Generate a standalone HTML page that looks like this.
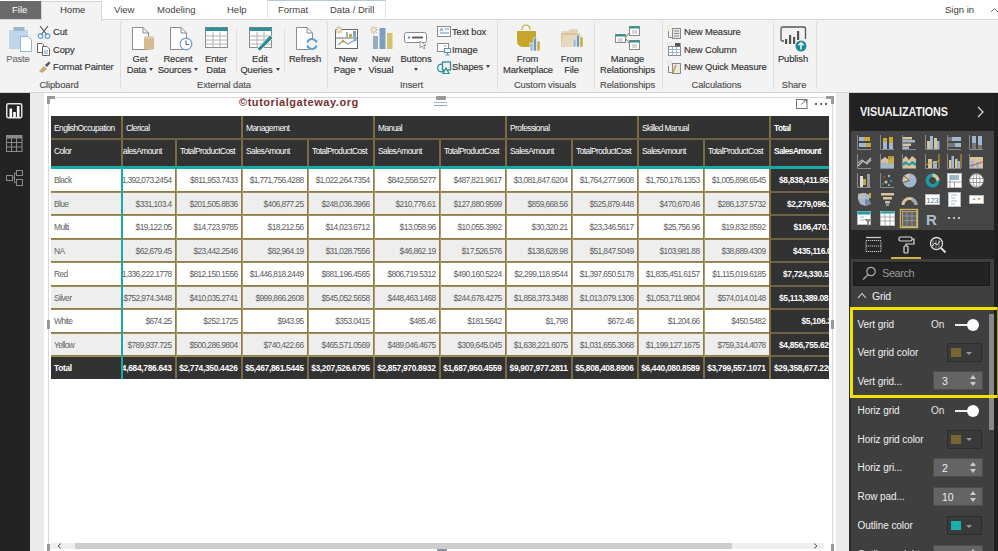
<!DOCTYPE html>
<html><head><meta charset="utf-8">
<style>
*{box-sizing:border-box;margin:0;padding:0}
html,body{width:998px;height:551px;overflow:hidden;background:#fff;font-family:"Liberation Sans",sans-serif}
.a{position:absolute}
.t{position:absolute;white-space:nowrap;line-height:1}
svg{position:absolute;overflow:visible}
.tb{font-size:9.5px;color:#444;top:5px}
.rt{font-size:9.4px;color:#333;letter-spacing:-0.1px;-webkit-text-stroke:0.15px #333}
.gl{font-size:9.4px;color:#505050;top:80px;letter-spacing:-0.1px;-webkit-text-stroke:0.15px #505050}
.sep{position:absolute;width:1px;background:#dedede;top:22px;height:67px}
.ssep{position:absolute;width:1px;background:#e0e0e0;top:28px;height:45px}
.th{font-size:8.4px;color:#fff;letter-spacing:-0.55px}
.td{font-size:8.4px;color:#5e5e5e;letter-spacing:-0.6px}
.tt{font-size:8.4px;color:#fff;font-weight:bold;letter-spacing:-0.3px}
.vt{font-size:10.5px;color:#f0f0f0;letter-spacing:-0.25px}
</style></head><body>
<div class="a" style="left:0;top:0;width:998px;height:20px;background:#fff;border-bottom:1px solid #d6d6d6"></div>
<div class="a" style="left:0;top:1px;width:41px;height:18px;background:#6b6969"></div>
<div class="t" style="left:12px;top:5px;font-size:9.5px;color:#fff">File</div>
<div class="a" style="left:41px;top:1px;width:61px;height:20px;background:#f3f3f3;border:1px solid #d6d6d6;border-bottom:none;z-index:2"></div>
<div class="t tb" style="left:60px;color:#333;z-index:3">Home</div>
<div class="t tb" style="left:114px">View</div>
<div class="t tb" style="left:157px">Modeling</div>
<div class="t tb" style="left:227px">Help</div>
<div class="a" style="left:267px;top:0;width:119px;height:20px;border-left:1px solid #e1e6ec;border-right:1px solid #e1e6ec;border-top:1px solid #b4c8dc"></div>
<div class="t tb" style="left:278px">Format</div>
<div class="t tb" style="left:330px">Data / Drill</div>
<div class="t tb" style="left:945px;color:#3a3a3a">Sign in</div>
<svg style="left:990px;top:7px" width="8" height="6"><path d="M1 5 L4.5 1.5 L8 5" fill="none" stroke="#777" stroke-width="1"/></svg>
<div class="a" style="left:0;top:20px;width:998px;height:73px;background:#f3f3f3;border-bottom:1px solid #d3d3d3"></div>
<style>
.c{position:absolute;width:120px;text-align:center;white-space:nowrap;line-height:1}
.dd{display:inline-block;width:0;height:0;border-left:2.5px solid transparent;border-right:2.5px solid transparent;border-top:3px solid #444;vertical-align:middle;margin-left:3px;position:relative;top:-1px}
</style>
<!-- separators -->
<div class="sep" style="left:120px"></div>
<div class="ssep" style="left:236px"></div>
<div class="ssep" style="left:284px"></div>
<div class="sep" style="left:327px"></div>
<div class="sep" style="left:497px"></div>
<div class="sep" style="left:594px"></div>
<div class="sep" style="left:662px"></div>
<div class="sep" style="left:773px"></div>
<div class="sep" style="left:816px"></div>
<!-- Clipboard -->
<svg style="left:8px;top:26px" width="24" height="26" viewBox="0 0 24 26">
<rect x="1" y="4" width="19" height="19" fill="#c0d7ea"/>
<rect x="5.5" y="1" width="11" height="4" fill="#9cb6cc"/>
<path d="M12.5 10.5 H20 L23.5 14 V25.5 H12.5 Z" fill="#fff" stroke="#8fb6d8" stroke-width="1"/>
</svg>
<div class="c rt" style="left:-42px;top:54px;color:#8a8a8a">Paste</div>
<svg style="left:37px;top:25px" width="14" height="14" viewBox="0 0 14 14">
<path d="M3 1 L10 10 M11 1 L4 10" stroke="#555" stroke-width="1.2" fill="none"/>
<circle cx="3.5" cy="11" r="2.3" fill="none" stroke="#6aa0d0" stroke-width="1.2"/>
<circle cx="10.5" cy="11" r="2.3" fill="none" stroke="#6aa0d0" stroke-width="1.2"/>
</svg>
<div class="t rt" style="left:53px;top:27px">Cut</div>
<svg style="left:37px;top:43px" width="14" height="13" viewBox="0 0 14 13">
<path d="M0.5 0.5 H5 L6.5 2 V9.5 H0.5 Z" fill="#fff" stroke="#666" stroke-width="1"/>
<path d="M5.5 3.5 H10 L12.5 6 V12.5 H5.5 Z" fill="#fff" stroke="#666" stroke-width="1"/>
<path d="M7 8 H11 M7 10 H11" stroke="#6aa0d0" stroke-width="1"/>
</svg>
<div class="t rt" style="left:53px;top:44.5px">Copy</div>
<svg style="left:38px;top:61px" width="13" height="12" viewBox="0 0 13 12">
<path d="M1 10 L6 5 L9 8 L4 12 Z" fill="#c9ab7a"/>
<path d="M7 4 L11 0.5 L12.5 2 L9 6 Z" fill="#555"/>
</svg>
<div class="t rt" style="left:53px;top:62px">Format Painter</div>
<div class="c gl" style="left:-1px">Clipboard</div>
<!-- External data -->
<svg style="left:131px;top:26px" width="25" height="25" viewBox="0 0 25 25">
<path d="M1.5 1.5 H12 L17.5 7 V23.5 H1.5 Z" fill="#fff" stroke="#8a8a8a" stroke-width="1"/>
<path d="M12 1.5 V7 H17.5" fill="none" stroke="#8a8a8a" stroke-width="1"/>
<path d="M13 11.5 Q18 9.5 23 11.5 V23 Q18 25 13 23 Z" fill="#d4bb93"/>
<ellipse cx="18" cy="11.5" rx="5" ry="1.5" fill="#e0ccaa"/>
</svg>
<div class="c rt" style="left:80px;top:54px">Get</div>
<div class="c rt" style="left:80px;top:64.5px">Data<span class="dd"></span></div>
<svg style="left:169px;top:26px" width="25" height="25" viewBox="0 0 25 25">
<path d="M1.5 1.5 H12 L17.5 7 V23.5 H1.5 Z" fill="#fff" stroke="#8a8a8a" stroke-width="1"/>
<path d="M12 1.5 V7 H17.5" fill="none" stroke="#8a8a8a" stroke-width="1"/>
<circle cx="17" cy="18" r="5.8" fill="#fff" stroke="#6a9fcf" stroke-width="1.2"/>
<path d="M17 14.5 V18.5 H20" fill="none" stroke="#555" stroke-width="1"/>
</svg>
<div class="c rt" style="left:118px;top:54px">Recent</div>
<div class="c rt" style="left:118px;top:64.5px">Sources<span class="dd"></span></div>
<svg style="left:205px;top:27px" width="24" height="22" viewBox="0 0 24 22">
<rect x="0.5" y="0.5" width="22" height="20" fill="#fff" stroke="#8a8a8a" stroke-width="1"/>
<rect x="0.5" y="0.5" width="22" height="3.5" fill="#2f8f94"/>
<path d="M0.5 9 H22.5 M0.5 13 H22.5 M0.5 17 H22.5 M8 4.5 V20.5 M15 4.5 V20.5" stroke="#b0b0b0" stroke-width="1"/>
</svg>
<div class="c rt" style="left:156px;top:54px">Enter</div>
<div class="c rt" style="left:156px;top:64.5px">Data</div>
<div class="c gl" style="left:164px">External data</div>
<svg style="left:249px;top:27px" width="25" height="23" viewBox="0 0 25 23">
<rect x="0.5" y="0.5" width="22" height="20" fill="#fff" stroke="#8a8a8a" stroke-width="1"/>
<rect x="0.5" y="0.5" width="22" height="3.5" fill="#2f8f94"/>
<path d="M0.5 9 H22.5 M0.5 13 H22.5 M0.5 17 H22.5 M8 4.5 V20.5 M15 4.5 V20.5" stroke="#b0b0b0" stroke-width="1"/>
<path d="M8 22 L21 8 L24 11 L11 24 Z" fill="#2a8d96" stroke="#f3f3f3" stroke-width="0.8"/>
</svg>
<div class="c rt" style="left:200px;top:54px">Edit</div>
<div class="c rt" style="left:200px;top:64.5px">Queries<span class="dd"></span></div>
<svg style="left:295px;top:26px" width="25" height="25" viewBox="0 0 25 25">
<path d="M1.5 1.5 H12 L17.5 7 V23.5 H1.5 Z" fill="#fff" stroke="#8a8a8a" stroke-width="1"/>
<path d="M12 1.5 V7 H17.5" fill="none" stroke="#8a8a8a" stroke-width="1"/>
<circle cx="17" cy="18" r="6" fill="#f3f3f3"/><path d="M12.5 16.5 A4.6 4.6 0 0 1 21 15.5" fill="none" stroke="#5d9fcf" stroke-width="2"/><path d="M19 13.5 L22.5 14.5 L21.5 17.5 Z" fill="#5d9fcf"/><path d="M21.5 19.5 A4.6 4.6 0 0 1 13 20.5" fill="none" stroke="#5d9fcf" stroke-width="2"/><path d="M15 22.5 L11.5 21.5 L12.5 18.5 Z" fill="#5d9fcf"/>
</svg>
<div class="c rt" style="left:245px;top:54px">Refresh</div>
<!-- Insert -->
<svg style="left:334px;top:25px" width="25" height="25" viewBox="0 0 25 25">
<rect x="1.5" y="4.5" width="22" height="19" fill="#fff" stroke="#666" stroke-width="1"/>
<path d="M1.5 13 H23.5" stroke="#666" stroke-width="1"/>
<rect x="12" y="7" width="2" height="5" fill="#9ab2c8"/><rect x="15" y="9" width="3" height="3" fill="#c9a830"/><rect x="19" y="6" width="3" height="6" fill="#7fa3c2"/>
<path d="M4 20 L9 16 L14 19 L21 15" fill="none" stroke="#7fa3c2" stroke-width="1.2"/>
<circle cx="9" cy="16" r="1.5" fill="#c9a830"/><circle cx="21" cy="15" r="1.5" fill="#7fa3c2"/>
<g stroke="#d4b47c" stroke-width="1"><path d="M5 1 V9 M1 5 H9 M2.2 2.2 L7.8 7.8 M7.8 2.2 L2.2 7.8"/></g><circle cx="5" cy="5" r="2.2" fill="#f3f3f3" stroke="#d4b47c" stroke-width="0.8"/>
</svg>
<div class="c rt" style="left:288px;top:54px">New</div>
<div class="c rt" style="left:288px;top:64.5px">Page<span class="dd"></span></div>
<svg style="left:369px;top:25px" width="24" height="25" viewBox="0 0 24 25">
<g stroke="#d4b47c" stroke-width="1"><path d="M5 1 V9 M1 5 H9 M2.2 2.2 L7.8 7.8 M7.8 2.2 L2.2 7.8"/></g><circle cx="5" cy="5" r="2.2" fill="#f3f3f3" stroke="#d4b47c" stroke-width="0.8"/>
<rect x="4" y="11" width="5" height="13" fill="#9aabbd"/>
<rect x="10.5" y="3" width="6" height="21" fill="#7a9fc0"/>
<rect x="18" y="8" width="5.5" height="16" fill="#d6c26a"/>
</svg>
<div class="c rt" style="left:321px;top:54px">New</div>
<div class="c rt" style="left:321px;top:64.5px">Visual</div>
<svg style="left:404px;top:32px" width="25" height="17" viewBox="0 0 25 17">
<rect x="0.5" y="0.5" width="22" height="10" rx="2" fill="#fff" stroke="#8a8a8a" stroke-width="1"/>
<circle cx="5" cy="5.5" r="1.3" fill="#6aa0d0"/>
<rect x="8" y="4.5" width="11" height="2" fill="#6b5d5d"/>
<path d="M16 9 V16 L18 14 L20 17 L21 16.5 L19.5 13.5 H22 Z" fill="#fff" stroke="#888" stroke-width="0.8"/>
</svg>
<div class="c rt" style="left:356px;top:54px">Buttons</div>
<div class="a" style="left:414px;top:68px;width:0;height:0;border-left:2.5px solid transparent;border-right:2.5px solid transparent;border-top:3px solid #444"></div>
<svg style="left:437px;top:26px" width="15" height="12" viewBox="0 0 15 12">
<rect x="0.5" y="0.5" width="13" height="10" fill="#fff" stroke="#8a8a8a" stroke-width="1"/>
<path d="M3 5 L4.5 2 L6 5 M7.5 3 H12 M3 7 H12" stroke="#5a8fc0" stroke-width="1" fill="none"/>
</svg>
<div class="t rt" style="left:452px;top:27px">Text box</div>
<svg style="left:437px;top:43px" width="15" height="13" viewBox="0 0 15 13">
<rect x="0.5" y="0.5" width="11" height="8" fill="#fff" stroke="#8a8a8a" stroke-width="1"/>
<circle cx="8" cy="3" r="1" fill="#d9b982"/>
<rect x="7.5" y="5.5" width="6" height="4" fill="#fff" stroke="#5a8fc0" stroke-width="1"/>
<path d="M10.5 9.5 V11.5 M8.5 12 H12.5" stroke="#5a8fc0" stroke-width="1"/>
</svg>
<div class="t rt" style="left:452px;top:44.5px">Image</div>
<svg style="left:437px;top:61px" width="15" height="13" viewBox="0 0 15 13">
<circle cx="4.5" cy="7" r="3.8" fill="none" stroke="#2a8d96" stroke-width="1.3"/>
<rect x="5.5" y="1" width="8" height="8" fill="#f3f3f3" stroke="#2a8d96" stroke-width="1.3"/>
<path d="M6 12.5 L9 7 L12 12.5 Z" fill="#f3f3f3" stroke="#2a8d96" stroke-width="1.2"/>
</svg>
<div class="t rt" style="left:452px;top:62px">Shapes<span class="dd"></span></div>
<div class="c gl" style="left:351.5px">Insert</div>
<!-- Custom visuals -->
<svg style="left:516px;top:24px" width="26" height="28" viewBox="0 0 26 28">
<path d="M6 6 Q6 1 10 1 Q14 1 14 6" fill="none" stroke="#c9a830" stroke-width="1.2"/>
<path d="M1 7 H20 V23 H8 Q1 23 1 17 Z" fill="#c7a62e"/>
<rect x="14" y="19" width="3" height="8" fill="#9ab7cf" stroke="#f3f3f3" stroke-width="0.6"/>
<rect x="17.5" y="14" width="3" height="13" fill="#6f97bb" stroke="#f3f3f3" stroke-width="0.6"/>
<rect x="21" y="17" width="3" height="10" fill="#c9a830" stroke="#f3f3f3" stroke-width="0.6"/>
</svg>
<div class="c rt" style="left:467.5px;top:54px">From</div>
<div class="c rt" style="left:468px;top:64.5px">Marketplace</div>
<svg style="left:560px;top:27px" width="26" height="22" viewBox="0 0 26 22">
<path d="M1 4 H8 L10 2 H18 V8 H4 Z" fill="#e6d6b8"/>
<path d="M1 6 H20 L17 20 H1 Z" fill="#d9c29a"/>
<path d="M3 8 H22 L19 20 H1 Z" fill="#e8d9bd"/>
<rect x="13" y="12" width="3" height="8" fill="#9ab7cf" stroke="#f3f3f3" stroke-width="0.6"/>
<rect x="16.5" y="8" width="3" height="12" fill="#6f97bb" stroke="#f3f3f3" stroke-width="0.6"/>
<rect x="20" y="10" width="3" height="10" fill="#c9a830" stroke="#f3f3f3" stroke-width="0.6"/>
</svg>
<div class="c rt" style="left:511.5px;top:54px">From</div>
<div class="c rt" style="left:511.5px;top:64.5px">File</div>
<div class="c gl" style="left:485px">Custom visuals</div>
<!-- Relationships -->
<svg style="left:615px;top:25px" width="27" height="26" viewBox="0 0 27 26">
<path d="M10 13 L15 7 M10 13 L15 19" stroke="#6b6b6b" stroke-width="1"/>
<rect x="0.5" y="9.5" width="10" height="8" fill="#fff" stroke="#8a8a8a" stroke-width="1"/><rect x="0.5" y="9.5" width="10" height="2" fill="#2f8f94"/>
<rect x="14.5" y="1.5" width="10" height="9" fill="#fff" stroke="#8a8a8a" stroke-width="1"/><rect x="14.5" y="1.5" width="10" height="2" fill="#2f8f94"/>
<rect x="14.5" y="15.5" width="10" height="9" fill="#fff" stroke="#8a8a8a" stroke-width="1"/><rect x="14.5" y="15.5" width="10" height="2" fill="#2f8f94"/>
<path d="M3 14 H8 M3 16 H8 M17 6 H22 M17 8 H22 M17 20 H22 M17 22 H22" stroke="#999" stroke-width="0.8"/>
</svg>
<div class="c rt" style="left:567.5px;top:54px">Manage</div>
<div class="c rt" style="left:567.5px;top:64.5px">Relationships</div>
<div class="c gl" style="left:567.5px">Relationships</div>
<!-- Calculations -->
<svg style="left:667px;top:25px" width="15" height="14" viewBox="0 0 15 14">
<circle cx="2.5" cy="2.5" r="2" fill="none" stroke="#d9b982" stroke-width="0.8" stroke-dasharray="0.8 0.8"/>
<path d="M1.5 6 V12.5 H7" fill="none" stroke="#888" stroke-width="1"/>
<rect x="5.5" y="3.5" width="8" height="10" fill="#e8e8e8" stroke="#8a8a8a" stroke-width="1"/>
<path d="M7 6 H12 M7 8.5 H12 M7 11 H12" stroke="#888" stroke-width="1"/>
</svg>
<div class="t rt" style="left:684px;top:27px">New Measure</div>
<svg style="left:667px;top:42px" width="15" height="14" viewBox="0 0 15 14">
<circle cx="2.5" cy="2.5" r="2" fill="none" stroke="#d9b982" stroke-width="0.8" stroke-dasharray="0.8 0.8"/>
<rect x="1.5" y="4.5" width="12" height="9" fill="#fff" stroke="#8a8a8a" stroke-width="1"/>
<rect x="8" y="1" width="5.5" height="3.5" fill="#555"/>
<path d="M1.5 7.5 H13.5 M1.5 10.5 H13.5 M5.5 4.5 V13.5 M9.5 4.5 V13.5" stroke="#9ab7cf" stroke-width="1"/>
</svg>
<div class="t rt" style="left:684px;top:44.5px">New Column</div>
<svg style="left:667px;top:60px" width="15" height="14" viewBox="0 0 15 14">
<circle cx="2.5" cy="2.5" r="2" fill="none" stroke="#d9b982" stroke-width="0.8" stroke-dasharray="0.8 0.8"/>
<path d="M1.5 6 V12.5 H7" fill="none" stroke="#888" stroke-width="1"/>
<rect x="5.5" y="3.5" width="8" height="10" fill="#e8e8e8" stroke="#8a8a8a" stroke-width="1"/>
<path d="M6 13 L9 5" stroke="#c9a830" stroke-width="1.5"/>
</svg>
<div class="t rt" style="left:684px;top:62px">New Quick Measure</div>
<div class="c gl" style="left:656.5px">Calculations</div>
<!-- Share -->
<svg style="left:780px;top:26px" width="28" height="27" viewBox="0 0 28 27">
<path d="M4 15 H2.5 Q1 15 1 13.5 V2.5 Q1 1 2.5 1 H24 Q25.5 1 25.5 2.5 V13" fill="none" stroke="#555" stroke-width="1.3"/>
<rect x="5" y="13" width="2.2" height="5" fill="#555"/><rect x="9" y="9" width="2.2" height="9" fill="#555"/><rect x="13" y="11" width="2.2" height="7" fill="#555"/><rect x="17" y="5" width="2.2" height="9" fill="#555"/>
<circle cx="21" cy="20" r="5.5" fill="#1d8a99"/>
<path d="M21 23.5 V17 M18.5 19.3 L21 16.8 L23.5 19.3" fill="none" stroke="#fff" stroke-width="1.4"/>
</svg>
<div class="c rt" style="left:733px;top:54px">Publish</div>
<div class="c gl" style="left:734px">Share</div>
<div class="a" style="left:0;top:93px;width:30px;height:458px;background:#232323"></div>
<svg style="left:6px;top:103px" width="17" height="16" viewBox="0 0 17 16">
<rect x="0.75" y="0.75" width="15" height="14" rx="1.5" fill="none" stroke="#e0e0e0" stroke-width="1.5"/>
<rect x="3.5" y="5.5" width="2.6" height="9" fill="#fff"/><rect x="7.2" y="9" width="2.6" height="5.5" fill="#fff"/><rect x="10.9" y="3" width="2.6" height="11.5" fill="#fff"/>
</svg>
<svg style="left:6px;top:135px" width="17" height="17" viewBox="0 0 17 17">
<rect x="0.5" y="0.5" width="15.5" height="16" fill="none" stroke="#8a8a8a" stroke-width="1"/>
<rect x="0.5" y="0.5" width="15.5" height="3" fill="#8a8a8a"/>
<path d="M0.5 7.5 H16 M0.5 12 H16 M5.5 3 V16.5 M10.5 3 V16.5" stroke="#8a8a8a" stroke-width="1"/>
</svg>
<svg style="left:6px;top:170px" width="17" height="16" viewBox="0 0 17 16">
<rect x="0.5" y="5.5" width="6" height="5" fill="none" stroke="#8a8a8a" stroke-width="1"/>
<rect x="10.5" y="0.5" width="6" height="5" fill="none" stroke="#8a8a8a" stroke-width="1"/>
<rect x="10.5" y="9.5" width="6" height="6" fill="none" stroke="#8a8a8a" stroke-width="1"/>
<path d="M6.5 8 H8.5 V3 H10.5 M8.5 8 V12.5 H10.5" fill="none" stroke="#8a8a8a" stroke-width="1"/>
</svg>
<div class="a" style="left:30px;top:93px;width:819px;height:458px;background:#ebebeb"></div>
<div class="a" style="left:44px;top:93px;width:792px;height:458px;background:#fff"></div>
<!-- frame -->
<div class="a" style="left:48px;top:97px;width:1px;height:454px;background:#d8d8d8"></div>
<div class="a" style="left:48px;top:97px;width:785px;height:1px;background:#d8d8d8"></div>
<div class="a" style="left:832px;top:97px;width:1px;height:454px;background:#d8d8d8"></div>
<div class="a" style="left:47px;top:96px;width:8px;height:3px;background:#9a9a9a"></div>
<div class="a" style="left:47px;top:96px;width:3px;height:8px;background:#9a9a9a"></div>
<div class="a" style="left:826px;top:96px;width:8px;height:3px;background:#9a9a9a"></div>
<div class="a" style="left:831px;top:96px;width:3px;height:8px;background:#9a9a9a"></div>
<div class="a" style="left:47px;top:320px;width:3px;height:9px;background:#9a9a9a"></div>
<div class="a" style="left:831px;top:320px;width:3px;height:9px;background:#9a9a9a"></div>
<div class="a" style="left:47px;top:544px;width:3px;height:7px;background:#9a9a9a"></div>
<div class="a" style="left:831px;top:544px;width:3px;height:7px;background:#9a9a9a"></div>
<div class="a" style="left:436px;top:96px;width:10px;height:4px;background:#9a969a;border-radius:1px"></div>
<div class="a" style="left:434px;top:102px;width:13px;height:1px;background:#b0b0b0"></div>
<div class="a" style="left:434px;top:105px;width:13px;height:1px;background:#90a8c8"></div>
<div class="t" style="left:239px;top:97px;font-size:11px;font-weight:bold;color:#7b3030;letter-spacing:0.55px">©tutorialgateway.org</div>
<!-- focus icons -->
<svg style="left:796px;top:99px" width="12" height="10" viewBox="0 0 12 10">
<rect x="0.5" y="0.5" width="10.5" height="9" fill="none" stroke="#777" stroke-width="1"/>
<path d="M5 5.5 L10 1 M7 1 H10.5 V4" fill="none" stroke="#777" stroke-width="1"/>
</svg>
<div class="a" style="left:815px;top:103px;width:2px;height:2px;background:#666"></div>
<div class="a" style="left:820px;top:103px;width:2px;height:2px;background:#666"></div>
<div class="a" style="left:825px;top:103px;width:2px;height:2px;background:#666"></div>
<!-- scrollbar -->
<div class="a" style="left:50px;top:543px;width:774px;height:6px;background:#efefef"></div>
<div class="a" style="left:75px;top:543px;width:657px;height:6px;background:#cdcdcd"></div>
<svg style="left:57px;top:543px" width="5" height="6" viewBox="0 0 5 6"><path d="M4 0.5 L1 3 L4 5.5" fill="none" stroke="#555" stroke-width="1"/></svg>
<svg style="left:813px;top:543px" width="5" height="6" viewBox="0 0 5 6"><path d="M1 0.5 L4 3 L1 5.5" fill="none" stroke="#555" stroke-width="1"/></svg>
<div class="a" style="left:437px;top:549px;width:10px;height:2px;background:#8a93a8"></div>
<div class="a" style="left:51px;top:116px;width:778px;height:50px;background:#323232;"></div>
<div class="a" style="left:51px;top:138px;width:778px;height:2px;background:#6d6040;"></div>
<div class="a" style="left:51px;top:166px;width:778px;height:3px;background:#17aaa6;"></div>
<div class="a" style="left:121px;top:116px;width:2px;height:22px;background:#7d6c42;"></div>
<div class="a" style="left:241px;top:116px;width:2px;height:22px;background:#7d6c42;"></div>
<div class="a" style="left:373px;top:116px;width:2px;height:22px;background:#7d6c42;"></div>
<div class="a" style="left:505px;top:116px;width:2px;height:22px;background:#7d6c42;"></div>
<div class="a" style="left:637px;top:116px;width:2px;height:22px;background:#7d6c42;"></div>
<div class="a" style="left:769px;top:116px;width:2px;height:22px;background:#7d6c42;"></div>
<div class="a" style="left:121px;top:140px;width:2px;height:26px;background:#7d6c42;"></div>
<div class="a" style="left:175px;top:140px;width:2px;height:26px;background:#7d6c42;"></div>
<div class="a" style="left:241px;top:140px;width:2px;height:26px;background:#7d6c42;"></div>
<div class="a" style="left:307px;top:140px;width:2px;height:26px;background:#7d6c42;"></div>
<div class="a" style="left:373px;top:140px;width:2px;height:26px;background:#7d6c42;"></div>
<div class="a" style="left:439px;top:140px;width:2px;height:26px;background:#7d6c42;"></div>
<div class="a" style="left:505px;top:140px;width:2px;height:26px;background:#7d6c42;"></div>
<div class="a" style="left:571px;top:140px;width:2px;height:26px;background:#7d6c42;"></div>
<div class="a" style="left:637px;top:140px;width:2px;height:26px;background:#7d6c42;"></div>
<div class="a" style="left:703px;top:140px;width:2px;height:26px;background:#7d6c42;"></div>
<div class="a" style="left:769px;top:140px;width:2px;height:26px;background:#7d6c42;"></div>
<div class="t th" style="left:54px;top:124px;">EnglishOccupation</div>
<div class="t th" style="left:126px;top:124px;">Clerical</div>
<div class="t th" style="left:246px;top:124px;">Management</div>
<div class="t th" style="left:378px;top:124px;">Manual</div>
<div class="t th" style="left:510px;top:124px;">Professional</div>
<div class="t th" style="left:642px;top:124px;">Skilled Manual</div>
<div class="t th" style="left:774px;top:124px;font-weight:bold;letter-spacing:-0.6px">Total</div>
<div class="t th" style="left:54px;top:147px;">Color</div>
<div class="a" style="left:123px;top:140px;width:52px;height:26px;overflow:hidden"><div class="t th" style="left:-5px;top:7px">SalesAmount</div></div>
<div class="t th" style="left:180px;top:147px;">TotalProductCost</div>
<div class="t th" style="left:246px;top:147px;">SalesAmount</div>
<div class="t th" style="left:312px;top:147px;">TotalProductCost</div>
<div class="t th" style="left:378px;top:147px;">SalesAmount</div>
<div class="t th" style="left:444px;top:147px;">TotalProductCost</div>
<div class="t th" style="left:510px;top:147px;">SalesAmount</div>
<div class="t th" style="left:576px;top:147px;">TotalProductCost</div>
<div class="t th" style="left:642px;top:147px;">SalesAmount</div>
<div class="t th" style="left:708px;top:147px;">TotalProductCost</div>
<div class="t th" style="left:774px;top:147px;font-weight:bold;letter-spacing:-0.6px">SalesAmount</div>
<div class="a" style="left:51px;top:169px;width:778px;height:22px;background:#ffffff;"></div>
<div class="a" style="left:771px;top:169px;width:58px;height:22px;background:#323232;"></div>
<div class="a" style="left:51px;top:191px;width:778px;height:1px;background:#907c47;"></div>
<div class="a" style="left:51px;top:192px;width:778px;height:1px;background:#a08d5c;"></div>
<div class="a" style="left:771px;top:191px;width:58px;height:2px;background:#6f6242;"></div>
<div class="t td" style="left:54px;top:176px;">Black</div>
<div class="a" style="left:123px;top:169px;width:52px;height:22px;overflow:hidden"><div class="t td" style="right:3.5px;top:7px">$1,392,073.2454</div></div>
<div class="t td" style="left:97px;top:176px;width:140.5px;text-align:right">$811,953.7433</div>
<div class="t td" style="left:163px;top:176px;width:140.5px;text-align:right">$1,771,756.4288</div>
<div class="t td" style="left:229px;top:176px;width:140.5px;text-align:right">$1,022,264.7354</div>
<div class="t td" style="left:295px;top:176px;width:140.5px;text-align:right">$842,558.5277</div>
<div class="t td" style="left:361px;top:176px;width:140.5px;text-align:right">$487,821.9617</div>
<div class="t td" style="left:427px;top:176px;width:140.5px;text-align:right">$3,081,847.6204</div>
<div class="t td" style="left:493px;top:176px;width:140.5px;text-align:right">$1,764,277.9608</div>
<div class="t td" style="left:559px;top:176px;width:140.5px;text-align:right">$1,750,176.1353</div>
<div class="t td" style="left:625px;top:176px;width:140.5px;text-align:right">$1,005,898.6545</div>
<div class="a" style="left:771px;top:169px;width:58px;height:22px;overflow:hidden"><div class="t tt" style="left:8px;top:7px">$8,838,411.9577</div></div>
<div class="a" style="left:51px;top:193px;width:778px;height:21px;background:#eeeeee;"></div>
<div class="a" style="left:771px;top:193px;width:58px;height:21px;background:#323232;"></div>
<div class="a" style="left:51px;top:214px;width:778px;height:1px;background:#907c47;"></div>
<div class="a" style="left:51px;top:215px;width:778px;height:1px;background:#a08d5c;"></div>
<div class="a" style="left:771px;top:214px;width:58px;height:2px;background:#6f6242;"></div>
<div class="t td" style="left:54px;top:200px;">Blue</div>
<div class="a" style="left:123px;top:193px;width:52px;height:21px;overflow:hidden"><div class="t td" style="right:3.5px;top:7px">$331,103.4</div></div>
<div class="t td" style="left:97px;top:200px;width:140.5px;text-align:right">$201,505.8836</div>
<div class="t td" style="left:163px;top:200px;width:140.5px;text-align:right">$406,877.25</div>
<div class="t td" style="left:229px;top:200px;width:140.5px;text-align:right">$248,036.3966</div>
<div class="t td" style="left:295px;top:200px;width:140.5px;text-align:right">$210,776.61</div>
<div class="t td" style="left:361px;top:200px;width:140.5px;text-align:right">$127,880.9599</div>
<div class="t td" style="left:427px;top:200px;width:140.5px;text-align:right">$859,668.56</div>
<div class="t td" style="left:493px;top:200px;width:140.5px;text-align:right">$525,879.448</div>
<div class="t td" style="left:559px;top:200px;width:140.5px;text-align:right">$470,670.46</div>
<div class="t td" style="left:625px;top:200px;width:140.5px;text-align:right">$286,137.5732</div>
<div class="a" style="left:771px;top:193px;width:58px;height:21px;overflow:hidden"><div class="t tt" style="left:16px;top:7px">$2,279,096.2388</div></div>
<div class="a" style="left:51px;top:216px;width:778px;height:22px;background:#ffffff;"></div>
<div class="a" style="left:771px;top:216px;width:58px;height:22px;background:#323232;"></div>
<div class="a" style="left:51px;top:238px;width:778px;height:1px;background:#907c47;"></div>
<div class="a" style="left:51px;top:239px;width:778px;height:1px;background:#a08d5c;"></div>
<div class="a" style="left:771px;top:238px;width:58px;height:2px;background:#6f6242;"></div>
<div class="t td" style="left:54px;top:223px;">Multi</div>
<div class="a" style="left:123px;top:216px;width:52px;height:22px;overflow:hidden"><div class="t td" style="right:3.5px;top:7px">$19,122.05</div></div>
<div class="t td" style="left:97px;top:223px;width:140.5px;text-align:right">$14,723.9785</div>
<div class="t td" style="left:163px;top:223px;width:140.5px;text-align:right">$18,212.56</div>
<div class="t td" style="left:229px;top:223px;width:140.5px;text-align:right">$14,023.6712</div>
<div class="t td" style="left:295px;top:223px;width:140.5px;text-align:right">$13,058.96</div>
<div class="t td" style="left:361px;top:223px;width:140.5px;text-align:right">$10,055.3992</div>
<div class="t td" style="left:427px;top:223px;width:140.5px;text-align:right">$30,320.21</div>
<div class="t td" style="left:493px;top:223px;width:140.5px;text-align:right">$23,346.5617</div>
<div class="t td" style="left:559px;top:223px;width:140.5px;text-align:right">$25,756.96</div>
<div class="t td" style="left:625px;top:223px;width:140.5px;text-align:right">$19,832.8592</div>
<div class="a" style="left:771px;top:216px;width:58px;height:22px;overflow:hidden"><div class="t tt" style="left:22.5px;top:7px">$106,470.7365</div></div>
<div class="a" style="left:51px;top:240px;width:778px;height:21px;background:#eeeeee;"></div>
<div class="a" style="left:771px;top:240px;width:58px;height:21px;background:#323232;"></div>
<div class="a" style="left:51px;top:261px;width:778px;height:1px;background:#907c47;"></div>
<div class="a" style="left:51px;top:262px;width:778px;height:1px;background:#a08d5c;"></div>
<div class="a" style="left:771px;top:261px;width:58px;height:2px;background:#6f6242;"></div>
<div class="t td" style="left:54px;top:247px;">NA</div>
<div class="a" style="left:123px;top:240px;width:52px;height:21px;overflow:hidden"><div class="t td" style="right:3.5px;top:7px">$62,679.45</div></div>
<div class="t td" style="left:97px;top:247px;width:140.5px;text-align:right">$23,442.2546</div>
<div class="t td" style="left:163px;top:247px;width:140.5px;text-align:right">$82,964.19</div>
<div class="t td" style="left:229px;top:247px;width:140.5px;text-align:right">$31,028.7556</div>
<div class="t td" style="left:295px;top:247px;width:140.5px;text-align:right">$46,862.19</div>
<div class="t td" style="left:361px;top:247px;width:140.5px;text-align:right">$17,526.576</div>
<div class="t td" style="left:427px;top:247px;width:140.5px;text-align:right">$138,628.98</div>
<div class="t td" style="left:493px;top:247px;width:140.5px;text-align:right">$51,847.5049</div>
<div class="t td" style="left:559px;top:247px;width:140.5px;text-align:right">$103,981.88</div>
<div class="t td" style="left:625px;top:247px;width:140.5px;text-align:right">$38,889.4309</div>
<div class="a" style="left:771px;top:240px;width:58px;height:21px;overflow:hidden"><div class="t tt" style="left:22px;top:7px">$435,116.0613</div></div>
<div class="a" style="left:51px;top:263px;width:778px;height:22px;background:#ffffff;"></div>
<div class="a" style="left:771px;top:263px;width:58px;height:22px;background:#323232;"></div>
<div class="a" style="left:51px;top:285px;width:778px;height:1px;background:#907c47;"></div>
<div class="a" style="left:51px;top:286px;width:778px;height:1px;background:#a08d5c;"></div>
<div class="a" style="left:771px;top:285px;width:58px;height:2px;background:#6f6242;"></div>
<div class="t td" style="left:54px;top:270px;">Red</div>
<div class="a" style="left:123px;top:263px;width:52px;height:22px;overflow:hidden"><div class="t td" style="right:3.5px;top:7px">$1,336,222.1778</div></div>
<div class="t td" style="left:97px;top:270px;width:140.5px;text-align:right">$812,150.1556</div>
<div class="t td" style="left:163px;top:270px;width:140.5px;text-align:right">$1,446,818.2449</div>
<div class="t td" style="left:229px;top:270px;width:140.5px;text-align:right">$881,196.4565</div>
<div class="t td" style="left:295px;top:270px;width:140.5px;text-align:right">$806,719.5312</div>
<div class="t td" style="left:361px;top:270px;width:140.5px;text-align:right">$490,160.5224</div>
<div class="t td" style="left:427px;top:270px;width:140.5px;text-align:right">$2,299,118.9544</div>
<div class="t td" style="left:493px;top:270px;width:140.5px;text-align:right">$1,397,650.5178</div>
<div class="t td" style="left:559px;top:270px;width:140.5px;text-align:right">$1,835,451.6157</div>
<div class="t td" style="left:625px;top:270px;width:140.5px;text-align:right">$1,115,019.6185</div>
<div class="a" style="left:771px;top:263px;width:58px;height:22px;overflow:hidden"><div class="t tt" style="left:12px;top:7px">$7,724,330.5244</div></div>
<div class="a" style="left:51px;top:287px;width:778px;height:21px;background:#eeeeee;"></div>
<div class="a" style="left:771px;top:287px;width:58px;height:21px;background:#323232;"></div>
<div class="a" style="left:51px;top:308px;width:778px;height:1px;background:#907c47;"></div>
<div class="a" style="left:51px;top:309px;width:778px;height:1px;background:#a08d5c;"></div>
<div class="a" style="left:771px;top:308px;width:58px;height:2px;background:#6f6242;"></div>
<div class="t td" style="left:54px;top:294px;">Silver</div>
<div class="a" style="left:123px;top:287px;width:52px;height:21px;overflow:hidden"><div class="t td" style="right:3.5px;top:7px">$752,974.3448</div></div>
<div class="t td" style="left:97px;top:294px;width:140.5px;text-align:right">$410,035.2741</div>
<div class="t td" style="left:163px;top:294px;width:140.5px;text-align:right">$999,866.2608</div>
<div class="t td" style="left:229px;top:294px;width:140.5px;text-align:right">$545,052.5658</div>
<div class="t td" style="left:295px;top:294px;width:140.5px;text-align:right">$448,463.1468</div>
<div class="t td" style="left:361px;top:294px;width:140.5px;text-align:right">$244,678.4275</div>
<div class="t td" style="left:427px;top:294px;width:140.5px;text-align:right">$1,858,373.3488</div>
<div class="t td" style="left:493px;top:294px;width:140.5px;text-align:right">$1,013,079.1306</div>
<div class="t td" style="left:559px;top:294px;width:140.5px;text-align:right">$1,053,711.9804</div>
<div class="t td" style="left:625px;top:294px;width:140.5px;text-align:right">$574,014.0148</div>
<div class="a" style="left:771px;top:287px;width:58px;height:21px;overflow:hidden"><div class="t tt" style="left:8px;top:7px">$5,113,389.0811</div></div>
<div class="a" style="left:51px;top:310px;width:778px;height:22px;background:#ffffff;"></div>
<div class="a" style="left:771px;top:310px;width:58px;height:22px;background:#323232;"></div>
<div class="a" style="left:51px;top:332px;width:778px;height:1px;background:#907c47;"></div>
<div class="a" style="left:51px;top:333px;width:778px;height:1px;background:#a08d5c;"></div>
<div class="a" style="left:771px;top:332px;width:58px;height:2px;background:#6f6242;"></div>
<div class="t td" style="left:54px;top:317px;">White</div>
<div class="a" style="left:123px;top:310px;width:52px;height:22px;overflow:hidden"><div class="t td" style="right:3.5px;top:7px">$674.25</div></div>
<div class="t td" style="left:97px;top:317px;width:140.5px;text-align:right">$252.1725</div>
<div class="t td" style="left:163px;top:317px;width:140.5px;text-align:right">$943.95</div>
<div class="t td" style="left:229px;top:317px;width:140.5px;text-align:right">$353.0415</div>
<div class="t td" style="left:295px;top:317px;width:140.5px;text-align:right">$485.46</div>
<div class="t td" style="left:361px;top:317px;width:140.5px;text-align:right">$181.5642</div>
<div class="t td" style="left:427px;top:317px;width:140.5px;text-align:right">$1,798</div>
<div class="t td" style="left:493px;top:317px;width:140.5px;text-align:right">$672.46</div>
<div class="t td" style="left:559px;top:317px;width:140.5px;text-align:right">$1,204.66</div>
<div class="t td" style="left:625px;top:317px;width:140.5px;text-align:right">$450.5482</div>
<div class="a" style="left:771px;top:310px;width:58px;height:22px;overflow:hidden"><div class="t tt" style="left:30.5px;top:7px">$5,106.3532</div></div>
<div class="a" style="left:51px;top:334px;width:778px;height:21px;background:#eeeeee;"></div>
<div class="a" style="left:771px;top:334px;width:58px;height:21px;background:#323232;"></div>
<div class="a" style="left:51px;top:355px;width:778px;height:1px;background:#907c47;"></div>
<div class="a" style="left:51px;top:356px;width:778px;height:1px;background:#a08d5c;"></div>
<div class="a" style="left:771px;top:355px;width:58px;height:2px;background:#6f6242;"></div>
<div class="t td" style="left:54px;top:341px;">Yellow</div>
<div class="a" style="left:123px;top:334px;width:52px;height:21px;overflow:hidden"><div class="t td" style="right:3.5px;top:7px">$789,937.725</div></div>
<div class="t td" style="left:97px;top:341px;width:140.5px;text-align:right">$500,286.9804</div>
<div class="t td" style="left:163px;top:341px;width:140.5px;text-align:right">$740,422.66</div>
<div class="t td" style="left:229px;top:341px;width:140.5px;text-align:right">$465,571.0569</div>
<div class="t td" style="left:295px;top:341px;width:140.5px;text-align:right">$489,046.4675</div>
<div class="t td" style="left:361px;top:341px;width:140.5px;text-align:right">$309,645.045</div>
<div class="t td" style="left:427px;top:341px;width:140.5px;text-align:right">$1,638,221.6075</div>
<div class="t td" style="left:493px;top:341px;width:140.5px;text-align:right">$1,031,655.3068</div>
<div class="t td" style="left:559px;top:341px;width:140.5px;text-align:right">$1,199,127.1675</div>
<div class="t td" style="left:625px;top:341px;width:140.5px;text-align:right">$759,314.4078</div>
<div class="a" style="left:771px;top:334px;width:58px;height:21px;overflow:hidden"><div class="t tt" style="left:8px;top:7px">$4,856,755.6276</div></div>
<div class="a" style="left:51px;top:357px;width:778px;height:22px;background:#323232;"></div>
<div class="a" style="left:771px;top:357px;width:58px;height:22px;background:#323232;"></div>
<div class="t tt" style="left:54px;top:364px;">Total</div>
<div class="a" style="left:123px;top:357px;width:52px;height:22px;overflow:hidden"><div class="t tt" style="right:3.5px;top:7px">$4,684,786.643</div></div>
<div class="t tt" style="left:97px;top:364px;width:140.5px;text-align:right">$2,774,350.4426</div>
<div class="t tt" style="left:163px;top:364px;width:140.5px;text-align:right">$5,467,861.5445</div>
<div class="t tt" style="left:229px;top:364px;width:140.5px;text-align:right">$3,207,526.6795</div>
<div class="t tt" style="left:295px;top:364px;width:140.5px;text-align:right">$2,857,970.8932</div>
<div class="t tt" style="left:361px;top:364px;width:140.5px;text-align:right">$1,687,950.4559</div>
<div class="t tt" style="left:427px;top:364px;width:140.5px;text-align:right">$9,907,977.2811</div>
<div class="t tt" style="left:493px;top:364px;width:140.5px;text-align:right">$5,808,408.8906</div>
<div class="t tt" style="left:559px;top:364px;width:140.5px;text-align:right">$6,440,080.8589</div>
<div class="t tt" style="left:625px;top:364px;width:140.5px;text-align:right">$3,799,557.1071</div>
<div class="a" style="left:771px;top:357px;width:58px;height:22px;overflow:hidden"><div class="t tt" style="left:3px;top:7px">$29,358,677.2200</div></div>
<div class="a" style="left:121px;top:169px;width:2px;height:210px;background:#17aaa6;"></div>
<div class="a" style="left:175px;top:169px;width:1px;height:188px;background:#907c47;"></div>
<div class="a" style="left:176px;top:169px;width:1px;height:188px;background:#ab9b70;"></div>
<div class="a" style="left:175px;top:357px;width:2px;height:22px;background:#7a6a42;"></div>
<div class="a" style="left:241px;top:169px;width:1px;height:188px;background:#907c47;"></div>
<div class="a" style="left:242px;top:169px;width:1px;height:188px;background:#ab9b70;"></div>
<div class="a" style="left:241px;top:357px;width:2px;height:22px;background:#7a6a42;"></div>
<div class="a" style="left:307px;top:169px;width:1px;height:188px;background:#907c47;"></div>
<div class="a" style="left:308px;top:169px;width:1px;height:188px;background:#ab9b70;"></div>
<div class="a" style="left:307px;top:357px;width:2px;height:22px;background:#7a6a42;"></div>
<div class="a" style="left:373px;top:169px;width:1px;height:188px;background:#907c47;"></div>
<div class="a" style="left:374px;top:169px;width:1px;height:188px;background:#ab9b70;"></div>
<div class="a" style="left:373px;top:357px;width:2px;height:22px;background:#7a6a42;"></div>
<div class="a" style="left:439px;top:169px;width:1px;height:188px;background:#907c47;"></div>
<div class="a" style="left:440px;top:169px;width:1px;height:188px;background:#ab9b70;"></div>
<div class="a" style="left:439px;top:357px;width:2px;height:22px;background:#7a6a42;"></div>
<div class="a" style="left:505px;top:169px;width:1px;height:188px;background:#907c47;"></div>
<div class="a" style="left:506px;top:169px;width:1px;height:188px;background:#ab9b70;"></div>
<div class="a" style="left:505px;top:357px;width:2px;height:22px;background:#7a6a42;"></div>
<div class="a" style="left:571px;top:169px;width:1px;height:188px;background:#907c47;"></div>
<div class="a" style="left:572px;top:169px;width:1px;height:188px;background:#ab9b70;"></div>
<div class="a" style="left:571px;top:357px;width:2px;height:22px;background:#7a6a42;"></div>
<div class="a" style="left:637px;top:169px;width:1px;height:188px;background:#907c47;"></div>
<div class="a" style="left:638px;top:169px;width:1px;height:188px;background:#ab9b70;"></div>
<div class="a" style="left:637px;top:357px;width:2px;height:22px;background:#7a6a42;"></div>
<div class="a" style="left:703px;top:169px;width:1px;height:188px;background:#907c47;"></div>
<div class="a" style="left:704px;top:169px;width:1px;height:188px;background:#ab9b70;"></div>
<div class="a" style="left:703px;top:357px;width:2px;height:22px;background:#7a6a42;"></div>
<div class="a" style="left:769px;top:169px;width:2px;height:210px;background:#857140;"></div>

<div class="a" style="left:849px;top:93px;width:149px;height:458px;background:#403f3f"></div>
<div class="a" style="left:849px;top:93px;width:149px;height:38px;background:#222"></div>
<div class="a" style="left:849px;top:131px;width:145px;height:99px;background:#464545"></div>
<div class="a" style="left:849px;top:230px;width:145px;height:29px;background:#252525"></div>
<div class="a" style="left:849px;top:93px;width:2px;height:458px;background:#2a2a2a"></div>
<div class="a" style="left:994px;top:93px;width:4px;height:458px;background:#1f1f1f"></div>
<div class="t" style="left:860px;top:106px;font-size:12px;font-weight:bold;color:#f2f2f2;letter-spacing:-0.1px;transform:scaleX(0.9);transform-origin:0 0">VISUALIZATIONS</div>
<svg style="left:977px;top:106px" width="7" height="12" viewBox="0 0 7 12"><path d="M1 1 L6 6 L1 11" fill="none" stroke="#ddd" stroke-width="1.2"/></svg>
<svg style="left:857px;top:135px" width="15" height="16" viewBox="0 0 15 16"><path d="M0.5 0 V14.5 H14" fill="none" stroke="#8a8a8a" stroke-width="1"/><rect x="2" y="2" width="6" height="4" fill="#9fb7cf"/><rect x="7" y="2" width="6" height="4" fill="#c8a83a"/><rect x="2" y="8" width="8" height="4" fill="#9fb7cf"/><rect x="9" y="8" width="5" height="4" fill="#c8a83a"/></svg>
<svg style="left:879.5px;top:135px" width="15" height="16" viewBox="0 0 15 16"><path d="M0.5 0 V14.5 H14" fill="none" stroke="#8a8a8a" stroke-width="1"/><rect x="3" y="7" width="4" height="7" fill="#9fb7cf"/><rect x="3" y="3" width="4" height="4" fill="#c8a83a"/><rect x="9" y="8" width="4" height="6" fill="#9fb7cf"/><rect x="9" y="2" width="4" height="6" fill="#c8a83a"/></svg>
<svg style="left:902px;top:135px" width="15" height="16" viewBox="0 0 15 16"><path d="M0.5 0 V14.5 H14" fill="none" stroke="#8a8a8a" stroke-width="1"/><rect x="1" y="2" width="9" height="2.5" fill="#d8c49c"/><rect x="1" y="5" width="12" height="2.5" fill="#9fb7cf"/><rect x="1" y="8.5" width="8" height="2.5" fill="#d8c49c"/><rect x="1" y="11.5" width="6" height="2.5" fill="#9fb7cf"/></svg>
<svg style="left:924.5px;top:135px" width="15" height="16" viewBox="0 0 15 16"><path d="M0.5 0 V14.5 H14" fill="none" stroke="#8a8a8a" stroke-width="1"/><rect x="2" y="6" width="3" height="8" fill="#d8c49c"/><rect x="5" y="1" width="3" height="13" fill="#9fb7cf"/><rect x="9" y="3" width="3" height="11" fill="#d8c49c"/><rect x="12" y="6" width="2.5" height="8" fill="#9fb7cf"/></svg>
<svg style="left:947px;top:135px" width="15" height="16" viewBox="0 0 15 16"><path d="M0.5 0 V14.5 H14" fill="none" stroke="#8a8a8a" stroke-width="1"/><rect x="1" y="2" width="4" height="4" fill="#777"/><rect x="5" y="2" width="9" height="4" fill="#9fb7cf"/><rect x="1" y="8" width="7" height="4" fill="#777"/><rect x="8" y="8" width="6" height="4" fill="#9fb7cf"/></svg>
<svg style="left:969px;top:135px" width="15" height="16" viewBox="0 0 15 16"><path d="M0.5 0 V14.5 H14" fill="none" stroke="#8a8a8a" stroke-width="1"/><rect x="3" y="1" width="4" height="7" fill="#9fb7cf"/><rect x="3" y="8" width="4" height="6" fill="#777"/><rect x="9" y="1" width="4" height="9" fill="#9fb7cf"/><rect x="9" y="10" width="4" height="4" fill="#777"/></svg>
<svg style="left:857px;top:154px" width="15" height="16" viewBox="0 0 15 16"><path d="M0.5 0 V14.5 H14" fill="none" stroke="#8a8a8a" stroke-width="1"/><path d="M1 12 L6 7 L9 9 L14 4" fill="none" stroke="#d8c49c" stroke-width="1.2"/><path d="M1 9 L5 6 L10 10 L14 6" fill="none" stroke="#9fb7cf" stroke-width="1.2"/></svg>
<svg style="left:879.5px;top:154px" width="15" height="16" viewBox="0 0 15 16"><path d="M0.5 0 V14.5 H14" fill="none" stroke="#8a8a8a" stroke-width="1"/><path d="M1 14 V6 L5 3 L9 6 L14 3 V14 Z" fill="#d8c49c"/><path d="M1 14 V9 L5 8 L9 10 L14 7 V14 Z" fill="#9fb7cf"/><rect x="8" y="2" width="6" height="8" fill="#c8a83a" opacity="0.8"/></svg>
<svg style="left:902px;top:154px" width="15" height="16" viewBox="0 0 15 16"><path d="M0.5 0 V14.5 H14" fill="none" stroke="#8a8a8a" stroke-width="1"/><path d="M1 14 V5 L4 2 L7 6 L10 2 L14 5 V14 Z" fill="#d8c49c"/><path d="M1 9 L4 7 L7 10 L10 7 L14 9 V12 L10 10 L7 12 L4 10 L1 12 Z" fill="#1f9aa0"/></svg>
<svg style="left:924.5px;top:154px" width="15" height="16" viewBox="0 0 15 16"><path d="M0.5 0 V14.5 H14" fill="none" stroke="#8a8a8a" stroke-width="1"/><rect x="3" y="5" width="4" height="9" fill="#d8c49c"/><rect x="8" y="7" width="4" height="7" fill="#9fb7cf"/><path d="M1 11 L6 8 L10 10 L14 6" fill="none" stroke="#c8a83a" stroke-width="1"/><path d="M14 0 V14" stroke="#c8a83a" stroke-width="1"/></svg>
<svg style="left:947px;top:154px" width="15" height="16" viewBox="0 0 15 16"><path d="M0.5 0 V14.5 H14" fill="none" stroke="#8a8a8a" stroke-width="1"/><rect x="2" y="6" width="2.5" height="8" fill="#d8c49c"/><rect x="4.5" y="2" width="2.5" height="12" fill="#9fb7cf"/><rect x="8" y="5" width="2.5" height="9" fill="#d8c49c"/><rect x="10.5" y="7" width="2.5" height="7" fill="#9fb7cf"/><path d="M14 0 V14" stroke="#c8a83a" stroke-width="1"/></svg>
<svg style="left:969px;top:154px" width="15" height="16" viewBox="0 0 15 16"><path d="M0.5 0 V14.5 H14" fill="none" stroke="#8a8a8a" stroke-width="1"/><rect x="1" y="3" width="13" height="11" fill="#d8c49c"/><rect x="2" y="7" width="3" height="7" fill="#9fb7cf"/><rect x="7" y="8" width="3" height="6" fill="#9fb7cf"/><path d="M1 12 L14 8" stroke="#c03050" stroke-width="0.8"/></svg>
<svg style="left:857px;top:173px" width="15" height="16" viewBox="0 0 15 16"><path d="M0.5 0 V14.5 H14" fill="none" stroke="#8a8a8a" stroke-width="1"/><rect x="3" y="3" width="3" height="11" fill="#ddd"/><rect x="6" y="6" width="3" height="6" fill="#c8a83a"/><rect x="10" y="1" width="3" height="13" fill="#999"/></svg>
<svg style="left:879.5px;top:173px" width="15" height="16" viewBox="0 0 15 16"><path d="M0.5 0 V14.5 H14" fill="none" stroke="#8a8a8a" stroke-width="1"/><circle cx="4" cy="4" r="1" fill="#c04060"/><circle cx="9" cy="3" r="1.2" fill="#9fb7cf"/><circle cx="6" cy="9" r="1.5" fill="#d8c49c"/><circle cx="11" cy="8" r="1.2" fill="#1f9aa0"/><circle cx="3" cy="11" r="1" fill="#1f9aa0"/><circle cx="9" cy="12" r="1" fill="#9fb7cf"/></svg>
<svg style="left:902px;top:173px" width="15" height="16" viewBox="0 0 15 16"><circle cx="7.5" cy="7.5" r="7" fill="#9fb7cf"/><path d="M7.5 7.5 V0.5 A7 7 0 0 0 0.8 9.5 Z" fill="#d8c49c"/><path d="M7.5 7.5 L0.8 9.5" stroke="#464545" stroke-width="0.8"/><path d="M7.5 7.5 L2 3" stroke="#464545" stroke-width="0.8"/></svg>
<svg style="left:924.5px;top:173px" width="15" height="16" viewBox="0 0 15 16"><circle cx="7.5" cy="7.5" r="5.2" fill="none" stroke="#1f9aa0" stroke-width="3.4"/><path d="M7.5 2.3 A5.2 5.2 0 0 1 12.7 7.5" fill="none" stroke="#d8c49c" stroke-width="3.4"/></svg>
<svg style="left:947px;top:173px" width="15" height="16" viewBox="0 0 15 16"><rect x="0.5" y="0.5" width="14" height="14" fill="#fff" stroke="#bbb"/><rect x="3" y="2" width="9" height="5" fill="#9fb7cf"/><path d="M0.5 9 H14.5 M7.5 9 V14.5 M3 2 V14.5" stroke="#888" stroke-width="0.8"/></svg>
<svg style="left:969px;top:173px" width="15" height="16" viewBox="0 0 15 16"><circle cx="7.5" cy="7.5" r="6.8" fill="#fff" stroke="#9fb7cf" stroke-width="1"/><path d="M1 5.5 H14 M1 9.5 H14 M7.5 1 V14" stroke="#888" stroke-width="0.8"/><ellipse cx="7.5" cy="7.5" rx="3.5" ry="6.8" fill="none" stroke="#888" stroke-width="0.8"/></svg>
<svg style="left:857px;top:192px" width="15" height="16" viewBox="0 0 15 16"><path d="M1 2 L8 1 L13 3 L12 8 L14 12 L8 14 L3 12 L1 7 Z" fill="#9fb7cf"/><path d="M1 2 L8 1 L8 7 L1 7 Z" fill="#bbb"/><path d="M8 7 L12 8 L14 12 L8 14 Z" fill="#7a8aa0"/><rect x="12" y="1" width="2" height="5" fill="#c8a83a"/></svg>
<svg style="left:879.5px;top:192px" width="15" height="16" viewBox="0 0 15 16"><rect x="1" y="1" width="13" height="2.5" fill="#d8c49c"/><rect x="3" y="5" width="9" height="2.5" fill="#d8c49c"/><rect x="5" y="9" width="5" height="2.5" fill="#bbb"/><rect x="6" y="12" width="3" height="2" fill="#999"/></svg>
<svg style="left:902px;top:192px" width="15" height="16" viewBox="0 0 15 16"><path d="M1 13 A6.5 6.5 0 0 1 14 13" fill="none" stroke="#d8c49c" stroke-width="3"/><path d="M10 7.5 A6.5 6.5 0 0 1 14 13" fill="none" stroke="#9aa8b8" stroke-width="3"/></svg>
<svg style="left:924.5px;top:192px" width="15" height="16" viewBox="0 0 15 16"><rect x="0.5" y="2.5" width="14" height="10" fill="#fff" stroke="#bbb"/><text x="7.5" y="10.5" font-size="7.5" font-family="Liberation Sans" text-anchor="middle" fill="#4a6d95">123</text></svg>
<svg style="left:947px;top:192px" width="15" height="16" viewBox="0 0 15 16"><rect x="1.5" y="0.5" width="12" height="14" fill="#fff" stroke="#bbb"/><path d="M4 3 H10 M4 6 H8 M4 9 H10 M4 12 H8" stroke="#9fb7cf" stroke-width="1.2"/></svg>
<svg style="left:969px;top:192px" width="15" height="16" viewBox="0 0 15 16"><rect x="0.5" y="3.5" width="14" height="8" fill="#fff" stroke="#bbb"/><path d="M3 8 L5 5.5 L7 8 Z" fill="#9fb7cf"/><path d="M8 6 L10 8.5 L12 6 Z" fill="#c8a83a"/></svg>
<svg style="left:857px;top:211px" width="15" height="16" viewBox="0 0 15 16"><rect x="0.5" y="0.5" width="13" height="13" fill="#fff" stroke="#bbb"/><rect x="0.5" y="0.5" width="13" height="3" fill="#1f9aa0"/><path d="M3 6 H7 M3 9 H7" stroke="#9fb7cf" stroke-width="1"/><path d="M7 8 H15 L12 11 V15 L10 14 V11 Z" fill="#8a8a8a"/></svg>
<svg style="left:879.5px;top:211px" width="15" height="16" viewBox="0 0 15 16"><rect x="0.5" y="0.5" width="14" height="14" fill="#fff" stroke="#bbb"/><rect x="0.5" y="0.5" width="14" height="2" fill="#1f9aa0"/><path d="M0.5 6 H14.5 M0.5 10 H14.5 M5 2 V14.5 M10 2 V14.5" stroke="#999" stroke-width="0.8"/></svg>
<svg style="left:902px;top:211px" width="15" height="16" viewBox="0 0 15 16"><rect x="-1.5" y="-1.5" width="17" height="18" fill="none" stroke="#d9b94a" stroke-width="1.4"/><rect x="0.5" y="0.5" width="14" height="15" fill="#666" stroke="#bbb" stroke-width="0.8"/><path d="M0.5 5 H14.5 M0.5 9.5 H14.5 M5 0.5 V15.5 M10 0.5 V15.5" stroke="#999" stroke-width="0.8"/></svg>
<svg style="left:924.5px;top:211px" width="15" height="16" viewBox="0 0 15 16"><text x="1" y="14" font-size="15" font-weight="bold" font-family="Liberation Sans" fill="#a9bdd3">R</text></svg>
<svg style="left:947px;top:211px" width="15" height="16" viewBox="0 0 15 16"><circle cx="2" cy="7" r="1.1" fill="#ddd"/><circle cx="7" cy="7" r="1.1" fill="#ddd"/><circle cx="12" cy="7" r="1.1" fill="#ddd"/></svg>
<svg style="left:865px;top:236px" width="17" height="17" viewBox="0 0 17 17"><path d="M1 1.5 H16" stroke="#ccc" stroke-width="1.3"/><rect x="1" y="4.5" width="15" height="11" fill="none" stroke="#ccc" stroke-width="1" stroke-dasharray="1.2 0.8"/><path d="M1 10 H16" stroke="#ccc" stroke-width="1" stroke-dasharray="1.2 0.8"/></svg>
<svg style="left:898px;top:236px" width="17" height="18" viewBox="0 0 17 18"><rect x="1" y="1" width="13" height="4" rx="1.5" fill="none" stroke="#ddd" stroke-width="1.2"/><path d="M14 3 H16 V8 H8 V10" fill="none" stroke="#ddd" stroke-width="1.2"/><rect x="6" y="10" width="4" height="7" rx="1" fill="none" stroke="#ddd" stroke-width="1.2"/></svg>
<svg style="left:929px;top:236px" width="18" height="18" viewBox="0 0 18 18"><circle cx="7.5" cy="7.5" r="6" fill="none" stroke="#ddd" stroke-width="1.3"/><path d="M3 10 L6 7 L8 9 L11 5" fill="none" stroke="#ddd" stroke-width="1"/><path d="M4 4 V11 M7 4 V12 M10 4 V12" stroke="#ddd" stroke-width="0.6"/><path d="M12 12 L16.5 16.5" stroke="#ddd" stroke-width="2"/></svg>
<div class="a" style="left:891px;top:257px;width:30px;height:2px;background:#d2b640"></div>
<div class="a" style="left:853px;top:262px;width:137px;height:24px;background:#232323;border:1px solid #1a1a1a"></div>
<svg style="left:862px;top:266px" width="14" height="15" viewBox="0 0 14 15"><circle cx="9" cy="5.5" r="4.2" fill="none" stroke="#aaa" stroke-width="1.2"/><path d="M6 8.7 L1 13.5" stroke="#aaa" stroke-width="1.3"/></svg>
<div class="t" style="left:882px;top:268px;font-size:11px;color:#9a9a9a;letter-spacing:-0.45px">Search</div>
<svg style="left:857px;top:292px" width="10" height="7" viewBox="0 0 10 7"><path d="M1 6 L5 1.5 L9 6" fill="none" stroke="#ddd" stroke-width="1.1"/></svg>
<div class="t vt" style="left:872px;top:291px">Grid</div>
<div class="a" style="left:989px;top:314px;width:4.5px;height:116px;background:#8a8989;border-radius:1px"></div>
<div class="t" style="left:857.5px;top:319.5px;font-size:10px;color:#f0f0f0;letter-spacing:-0.07px">Vert grid</div>
<div class="t" style="left:857.5px;top:348.2px;font-size:10px;color:#f0f0f0;letter-spacing:-0.07px">Vert grid color</div>
<div class="t" style="left:857.5px;top:377px;font-size:10px;color:#f0f0f0;letter-spacing:-0.07px">Vert grid...</div>
<div class="t" style="left:857.5px;top:406px;font-size:10px;color:#f0f0f0;letter-spacing:-0.07px">Horiz grid</div>
<div class="t" style="left:857.5px;top:434.7px;font-size:10px;color:#f0f0f0;letter-spacing:-0.07px">Horiz grid color</div>
<div class="t" style="left:857.5px;top:463.4px;font-size:10px;color:#f0f0f0;letter-spacing:-0.07px">Horiz gri...</div>
<div class="t" style="left:857.5px;top:492.1px;font-size:10px;color:#f0f0f0;letter-spacing:-0.07px">Row pad...</div>
<div class="t" style="left:857.5px;top:520.8px;font-size:10px;color:#f0f0f0;letter-spacing:-0.07px">Outline color</div>
<div class="t" style="left:857.5px;top:549.5px;font-size:10px;color:#f0f0f0;letter-spacing:-0.07px">Outline weight</div>
<div class="t" style="left:931px;top:320px;font-size:10px;color:#e6e6e6;letter-spacing:-0.1px">On</div>
<div class="a" style="left:955px;top:324.25px;width:14px;height:1.5px;background:#eee"></div>
<div class="a" style="left:967px;top:319px;width:12px;height:12px;border-radius:50%;background:#fff"></div>
<div class="a" style="left:947px;top:343px;width:35px;height:19px;background:#3b3a3a;border:1px solid #2e2d2d"></div>
<div class="a" style="left:951px;top:348px;width:10px;height:9px;background:#7a6630"></div>
<div class="a" style="left:966px;top:351.5px;width:0;height:0;border-left:3px solid transparent;border-right:3px solid transparent;border-top:3px solid #999"></div>
<div class="a" style="left:933px;top:371px;width:50px;height:19px;background:#656464;border:1px solid #4e4d4d"></div>
<div class="t" style="left:942px;top:375.5px;font-size:10.5px;color:#eee">3</div>
<div class="a" style="left:970px;top:374.5px;width:0;height:0;border-left:3.5px solid transparent;border-right:3.5px solid transparent;border-bottom:4px solid #ccc"></div>
<div class="a" style="left:970px;top:382px;width:0;height:0;border-left:3.5px solid transparent;border-right:3.5px solid transparent;border-top:4px solid #ccc"></div>
<div class="t" style="left:931px;top:406px;font-size:10px;color:#e6e6e6;letter-spacing:-0.1px">On</div>
<div class="a" style="left:955px;top:410.25px;width:14px;height:1.5px;background:#eee"></div>
<div class="a" style="left:967px;top:405px;width:12px;height:12px;border-radius:50%;background:#fff"></div>
<div class="a" style="left:947px;top:429.5px;width:35px;height:19px;background:#3b3a3a;border:1px solid #2e2d2d"></div>
<div class="a" style="left:951px;top:434.5px;width:10px;height:9px;background:#7a6630"></div>
<div class="a" style="left:966px;top:438.0px;width:0;height:0;border-left:3px solid transparent;border-right:3px solid transparent;border-top:3px solid #999"></div>
<div class="a" style="left:933px;top:458px;width:50px;height:19px;background:#656464;border:1px solid #4e4d4d"></div>
<div class="t" style="left:942px;top:462.5px;font-size:10.5px;color:#eee">2</div>
<div class="a" style="left:970px;top:461.5px;width:0;height:0;border-left:3.5px solid transparent;border-right:3.5px solid transparent;border-bottom:4px solid #ccc"></div>
<div class="a" style="left:970px;top:469px;width:0;height:0;border-left:3.5px solid transparent;border-right:3.5px solid transparent;border-top:4px solid #ccc"></div>
<div class="a" style="left:933px;top:487px;width:50px;height:19px;background:#656464;border:1px solid #4e4d4d"></div>
<div class="t" style="left:942px;top:491.5px;font-size:10.5px;color:#eee">10</div>
<div class="a" style="left:970px;top:490.5px;width:0;height:0;border-left:3.5px solid transparent;border-right:3.5px solid transparent;border-bottom:4px solid #ccc"></div>
<div class="a" style="left:970px;top:498px;width:0;height:0;border-left:3.5px solid transparent;border-right:3.5px solid transparent;border-top:4px solid #ccc"></div>
<div class="a" style="left:947px;top:516px;width:35px;height:19px;background:#3b3a3a;border:1px solid #2e2d2d"></div>
<div class="a" style="left:951px;top:521px;width:10px;height:9px;background:#18b0ac"></div>
<div class="a" style="left:966px;top:524.5px;width:0;height:0;border-left:3px solid transparent;border-right:3px solid transparent;border-top:3px solid #999"></div>
<div class="a" style="left:933px;top:545px;width:50px;height:19px;background:#656464;border:1px solid #4e4d4d"></div>
<div class="t" style="left:942px;top:549.5px;font-size:10.5px;color:#eee">1</div>
<div class="a" style="left:970px;top:548.5px;width:0;height:0;border-left:3.5px solid transparent;border-right:3.5px solid transparent;border-bottom:4px solid #ccc"></div>
<div class="a" style="left:970px;top:556px;width:0;height:0;border-left:3.5px solid transparent;border-right:3.5px solid transparent;border-top:4px solid #ccc"></div>
<div class="a" style="left:850px;top:307px;width:148px;height:3px;background:#f2e200"></div>
<div class="a" style="left:850px;top:395px;width:148px;height:3px;background:#f2e200"></div>
<div class="a" style="left:850px;top:307px;width:3px;height:91px;background:#f2e200"></div>
<div class="a" style="left:997px;top:307px;width:1px;height:91px;background:#a89c20"></div>
</body></html>
